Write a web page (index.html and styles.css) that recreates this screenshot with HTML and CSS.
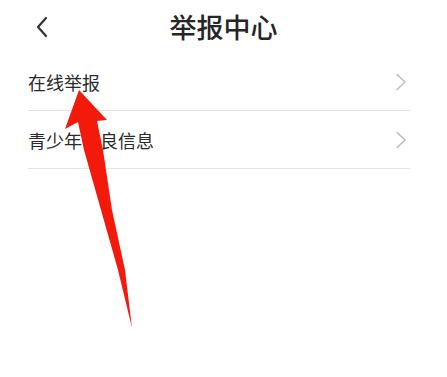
FILE: index.html
```html
<!DOCTYPE html>
<html lang="zh-CN">
<head>
<meta charset="utf-8">
<title>举报中心</title>
<link rel="stylesheet" href="styles.css">
</head>
<body>
<div class="page">
  <header class="topbar">
    <div class="back">
      <svg width="14" height="22" viewBox="0 0 14 22"><path d="M11 2 L3 11 L11 20" fill="none" stroke="#333" stroke-width="2.2" stroke-linecap="round" stroke-linejoin="round"/></svg>
    </div>
    <h1 class="title">举报中心</h1>
    <div></div>
  </header>
  <ul class="list">
    <li class="row"><span class="label">在线举报</span>
      <svg class="chev" width="12" height="18" viewBox="0 0 12 18"><path d="M2 1.5 L10 9 L2 16.5" fill="none" stroke="#bdbdbd" stroke-width="1.6" stroke-linecap="round" stroke-linejoin="round"/></svg>
    </li>
    <li class="row"><span class="label">青少年不良信息</span>
      <svg class="chev" width="12" height="18" viewBox="0 0 12 18"><path d="M2 1.5 L10 9 L2 16.5" fill="none" stroke="#bdbdbd" stroke-width="1.6" stroke-linecap="round" stroke-linejoin="round"/></svg>
    </li>
  </ul>
  <svg class="arrow" width="447" height="377" viewBox="0 0 447 377">
    <path d="M79 90 L107 120 L97 121 L103 150 L112 210 L125 270 L132 328 L118 270 L101 210 L84 150 L78 122 L65 129 Z" fill="#f31a0c"/>
  </svg>
</div>
</body>
</html>
```

FILE: styles.css
```css
* { box-sizing: border-box; }
html, body { margin: 0; padding: 0; background: #fff; }
body {
  font-family: "Noto Sans CJK SC", "Noto Sans", sans-serif;
  color: #333;
}
.page {
  position: relative;
  width: 447px;
  height: 377px;
  overflow: hidden;
}
.topbar {
  height: 53px;
  display: grid;
  grid-template-columns: 1fr auto 1fr;
  align-items: center;
}
.back {
  padding-left: 35px;
  display: flex;
  align-items: center;
}
.title {
  margin: 0;
  font-size: 27px;
  font-weight: 500;
  color: #262626;
  line-height: 1;
}
.list {
  list-style: none;
  margin: 0 37px 0 28px;
  padding: 0;
}
.row {
  height: 58px;
  border-bottom: 1px solid #e3e3e3;
  display: flex;
  align-items: center;
  justify-content: space-between;
}
.label {
  font-size: 18px;
  color: #2a2a2a;
}
.chev { margin-right: 3px; }
.arrow {
  position: absolute;
  left: 0;
  top: 0;
  pointer-events: none;
}
```
